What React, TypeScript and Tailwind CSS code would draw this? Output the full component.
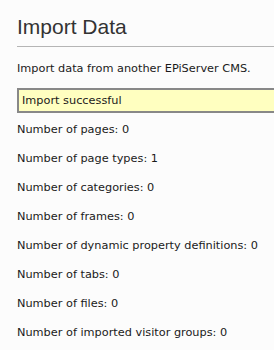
import React from "react";

const rows = [
  "Number of pages: 0",
  "Number of page types: 1",
  "Number of categories: 0",
  "Number of frames: 0",
  "Number of dynamic property definitions: 0",
  "Number of tabs: 0",
  "Number of files: 0",
  "Number of imported visitor groups: 0",
];

export default function App() {
  return (
    <div className="w-[274px] h-[350px] overflow-hidden bg-[#fcfcfc] pl-[17px] text-[#1a1a1a]" style={{ fontFamily: '"DejaVu Sans", Verdana, sans-serif' }}>
      <h1 className="pt-[16px] pb-[8px] text-[21px] leading-[22px] text-[#333] border-b border-[#b5b5b5]" style={{ fontFamily: '"Liberation Sans", Arial, sans-serif' }}>
        Import Data
      </h1>
      <p className="mt-[15px] text-[11.3px] leading-[14px]">Import data from another EPiServer CMS.</p>
      <div className="mt-[12px] w-[300px] border-2 border-[#888] bg-[#ffffc0] px-[3px] py-[3px] text-[11.3px] leading-[15px]">
        Import successful
      </div>
      <div className="mt-[10px] flex flex-col gap-[15px] text-[11.3px] leading-[14px]">
        {rows.map((r) => (
          <div key={r}>{r}</div>
        ))}
      </div>
    </div>
  );
}
